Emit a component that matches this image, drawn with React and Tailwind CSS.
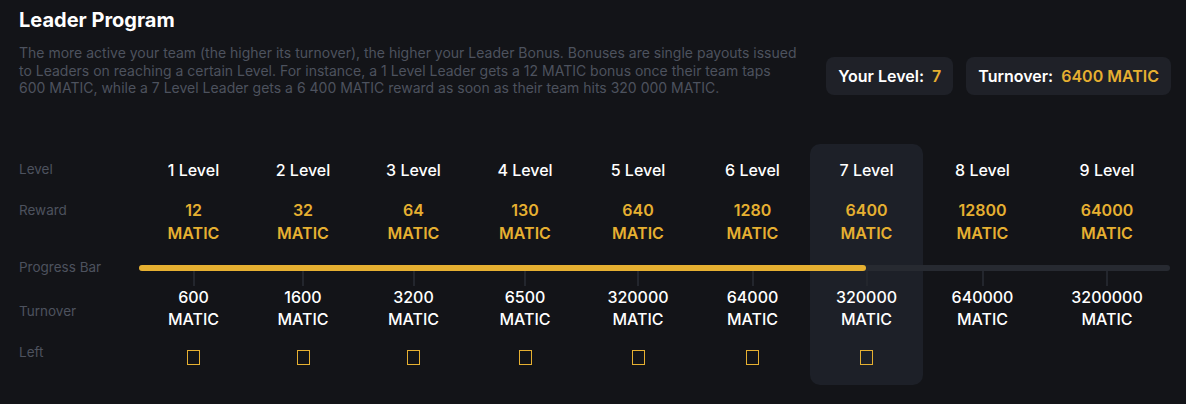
const levels = [
  { level: 1, reward: '12', turnover: '600' },
  { level: 2, reward: '32', turnover: '1600' },
  { level: 3, reward: '64', turnover: '3200' },
  { level: 4, reward: '130', turnover: '6500' },
  { level: 5, reward: '640', turnover: '320000' },
  { level: 6, reward: '1280', turnover: '64000' },
  { level: 7, reward: '6400', turnover: '320000' },
  { level: 8, reward: '12800', turnover: '640000' },
  { level: 9, reward: '64000', turnover: '3200000' },
]

const currentLevel = 7

function Badge({ label, value }) {
  return (
    <div className="h-[38px] px-3 rounded-lg bg-[#1f2128] flex items-center text-[16px] font-semibold">
      <span className="text-white">{label}</span>
      <span className="ml-2 text-[#e6b031]">{value}</span>
    </div>
  )
}

export default function App() {
  return (
    <div
      className="w-[1186px] h-[404px] bg-[#131418] pl-[19px] pr-[15px] pt-[8px] overflow-hidden"
      style={{ fontFamily: 'Inter, "Noto Sans", sans-serif' }}
    >
      <h2 className="text-[20px] leading-[24px] font-bold text-white">Leader Program</h2>

      <div className="flex justify-between items-start mt-[12px]">
        <p className="text-[14px] leading-[17.5px] text-[#4d525e] whitespace-nowrap">
          The more active your team (the higher its turnover), the higher your Leader Bonus. Bonuses are single payouts issued
          <br />
          to Leaders on reaching a certain Level. For instance, a 1 Level Leader gets a 12 MATIC bonus once their team taps
          <br />
          600 MATIC, while a 7 Level Leader gets a 6 400 MATIC reward as soon as their team hits 320 000 MATIC.
        </p>
        <div className="flex gap-[13px] mt-[13px]">
          <Badge label="Your Level:" value="7" />
          <Badge label="Turnover:" value="6400 MATIC" />
        </div>
      </div>

      <div className="mt-[47px] grid grid-cols-[120px_109px_110px_111px_112px_114px_115px_113px_119px_130px] grid-rows-[52px_60px_24px_auto_55px]">
        {/* highlighted current level column */}
        <div className="col-start-8 row-start-1 row-span-5 bg-[#1d2028] rounded-[10px]" />

        {/* Level row */}
        <div className="col-start-1 row-start-1 self-center text-[13.5px] leading-[17px] text-[#4d525e]">Level</div>
        {levels.map((l, i) => (
          <div
            key={'lv' + l.level}
            className="row-start-1 self-center text-center text-[16px] leading-[20px] font-medium text-white"
            style={{ gridColumnStart: i + 2 }}
          >
            {l.level} Level
          </div>
        ))}

        {/* Reward row */}
        <div className="col-start-1 row-start-2 pt-[3px] text-[13.5px] leading-[23px] text-[#4d525e]">Reward</div>
        {levels.map((l, i) => (
          <div
            key={'rw' + l.level}
            className="row-start-2 pt-[3px] text-center text-[16px] leading-[23px] font-semibold text-[#e6b031]"
            style={{ gridColumnStart: i + 2 }}
          >
            {l.reward}
            <br />
            MATIC
          </div>
        ))}

        {/* Progress bar */}
        <div className="col-start-1 row-start-3 self-center text-[13.5px] leading-[17px] text-[#4d525e] whitespace-nowrap">Progress Bar</div>
        <div className="col-start-2 col-span-9 row-start-3 self-center pr-[2px] relative z-10">
          <div className="h-[6px] rounded-full bg-[#272a31]">
            <div className="h-[6px] w-[727px] rounded-full bg-[#e6b031]" />
          </div>
        </div>

        {/* Turnover row */}
        <div className="col-start-1 row-start-4 mt-[23px] text-[13.5px] leading-[17px] text-[#4d525e]">Turnover</div>
        {levels.map((l, i) => (
          <div
            key={'to' + l.level}
            className="row-start-4 flex flex-col items-center"
            style={{ gridColumnStart: i + 2 }}
          >
            <div className="w-[2px] h-[15px] -mt-[9px] bg-[#23262d]" />
            <div className="text-center text-[16px] leading-[22px] font-medium text-white">
              {l.turnover}
              <br />
              MATIC
            </div>
          </div>
        ))}

        {/* Left row */}
        <div className="col-start-1 row-start-5 mt-[14px] text-[13.5px] leading-[17px] text-[#4d525e]">Left</div>
        {levels
          .filter((l) => l.level <= currentLevel)
          .map((l, i) => (
            <div
              key={'lf' + l.level}
              className="row-start-5 flex justify-center pt-[20px]"
              style={{ gridColumnStart: i + 2 }}
            >
              <span className="w-[13px] h-[15px] border-[1.5px] border-[#e6b031]" />
            </div>
          ))}
      </div>
    </div>
  )
}
